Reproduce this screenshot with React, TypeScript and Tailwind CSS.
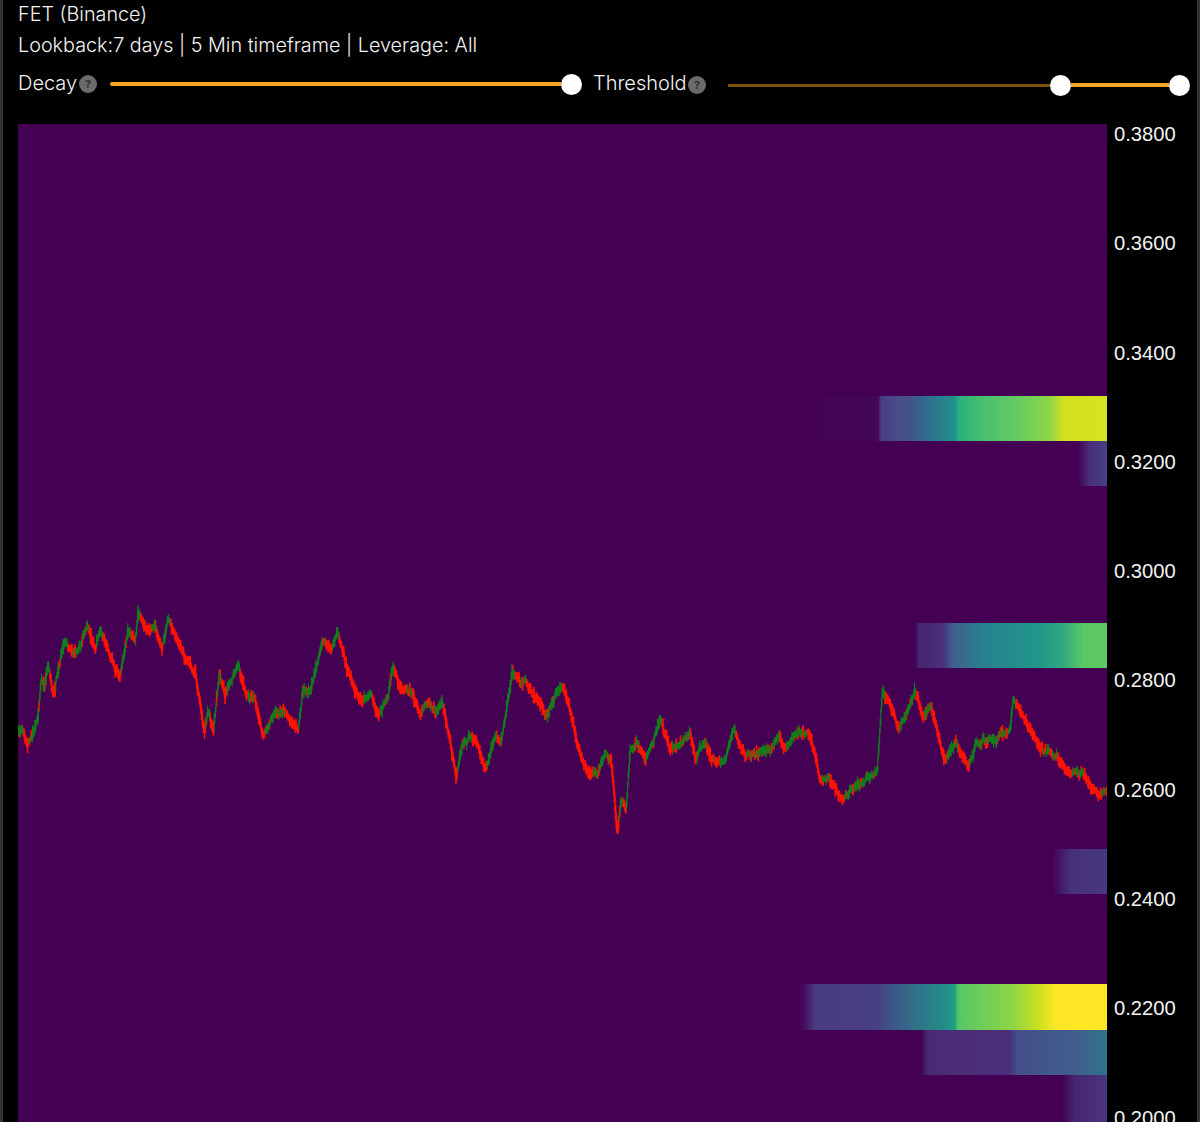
import React from 'react';

const pricePoints: [number, number][] = [
  [18,733],[22,728],[27,745],[33,733],[38,715],[41,680],[44,688],[48,665],[53,690],[60,660],[65,640],[72,650],[80,645],[87,622],[95,650],[100,630],[108,650],[120,675],[128,630],[135,640],[138,610],[148,630],[155,628],[162,650],[168,615],[175,635],[185,655],[195,670],[204,730],[208,710],[213,730],[219,670],[225,695],[230,680],[238,665],[245,695],[255,700],[263,735],[275,715],[285,712],[298,730],[303,690],[310,695],[322,640],[330,650],[337,635],[345,660],[355,690],[362,700],[370,690],[378,715],[388,695],[393,665],[400,690],
  [412,695],[420,715],[425,705],[435,715],[442,705],[450,740],[456,775],[462,745],[470,735],[478,745],[485,770],[495,735],[500,745],[505,720],[512,672],[520,685],[525,680],[535,700],[547,715],[555,695],[562,685],[570,710],[578,750],[590,775],[598,775],[605,755],[610,760],[612,770],[617,835],[621,800],[626,810],[630,750],[637,745],[645,760],[655,735],[660,720],[670,750],[680,745],[690,735],[695,760],[700,750],[705,745],[712,760],[725,760],[733,732],[745,755],[755,755],[770,745],[778,735],[785,750],[795,735],[808,730],
  [815,755],[820,780],[828,775],[838,795],[842,800],[855,790],[870,775],[877,770],[882,690],[888,700],[898,725],[905,715],[915,690],[922,715],[930,705],[937,730],[945,760],[955,745],[968,765],[975,745],[990,740],[1000,735],[1010,730],[1013,700],[1020,710],[1030,730],[1040,750],[1055,755],[1070,775],[1082,770],[1090,785],[1098,795],[1107,795],
];

// viridis bands, x in page pixels
const bands: { y: number; h: number; stops: [number, string][] }[] = [
  { y: 396, h: 45, stops: [[820,'#440154'],[830,'#440556'],[878,'#440657'],[881,'#4b3c85'],[900,'#464f8a'],[908,'#465088'],[917,'#3c5e8c'],[927,'#2f6f8d'],[955,'#218f8d'],[958,'#2aae80'],[980,'#45bf70'],[1010,'#60c865'],[1040,'#80d450'],[1050,'#8fd645'],[1060,'#c0dc28'],[1066,'#d4e01e'],[1107,'#d4e41e']] },
  { y: 441, h: 45, stops: [[1078,'#440154'],[1090,'#47307a'],[1107,'#473f85']] },
  { y: 623, h: 45, stops: [[915,'#440154'],[919,'#46256f'],[943,'#49307a'],[953,'#3e5f8c'],[980,'#2a7f8e'],[1040,'#1f9889'],[1063,'#30a880'],[1083,'#5ac864'],[1107,'#5dc863']] },
  { y: 849, h: 45, stops: [[1052,'#440154'],[1070,'#47307a'],[1107,'#47387f']] },
  { y: 984, h: 46, stops: [[798,'#440154'],[805,'#450f5e'],[815,'#483c83'],[877,'#483f84'],[900,'#3a6089'],[947,'#219087'],[955,'#20a083'],[958,'#55c667'],[1013,'#8ed645'],[1040,'#cfe11c'],[1057,'#fde725'],[1107,'#fde725']] },
  { y: 1030, h: 45, stops: [[921,'#440154'],[928,'#4a2a75'],[1010,'#4b2f7a'],[1017,'#44508a'],[1080,'#3f5f8c'],[1107,'#2f748c']] },
  { y: 1075, h: 47, stops: [[1062,'#440154'],[1075,'#47266f'],[1107,'#4a3580']] },
];

const axisLabels = ['0.3800','0.3600','0.3400','0.3200','0.3000','0.2800','0.2600','0.2400','0.2200','0.2000'];

const priceAt = (x: number) => {
  for (let i = 1; i < pricePoints.length; i++) {
    const [x0, y0] = pricePoints[i - 1];
    const [x1, y1] = pricePoints[i];
    if (x <= x1) return y0 + ((y1 - y0) * (x - x0)) / (x1 - x0);
  }
  return pricePoints[pricePoints.length - 1][1];
};

const buildCandles = () => {
  let seed = 7;
  const rand = () => {
    seed = (seed * 16807) % 2147483647;
    return seed / 2147483647;
  };
  let red = '';
  let green = '';
  let wobble = 0;
  for (let x = 18; x < 1107; x += 0.6) {
    wobble = wobble * 0.88 + (rand() - 0.5) * 3;
    const prev = priceAt(x - 0.6);
    const cur = priceAt(x);
    const top = Math.min(prev, cur) + wobble - 2 - rand() * rand() * 7;
    const bottom = Math.max(prev, cur) + wobble + 2 + rand() * rand() * 7;
    // steep falls stay red, steep rises stay green, flat stretches mix
    const slope = Math.max(-1, Math.min(1, (priceAt(x) - priceAt(x - 3)) / 4));
    const px = (x - 18).toFixed(1);
    const seg = `M${px} ${top.toFixed(1)}V${bottom.toFixed(1)}`;
    if (rand() < 0.55 + slope * 0.45) red += seg;
    else green += seg;
  }
  return { red, green };
};

const candles = buildCandles();

const HelpDot = ({ className }: { className: string }) => (
  <span className={`flex h-[18px] w-[18px] shrink-0 items-center justify-center rounded-full bg-[#6b6b6b] text-[11px] font-bold leading-none text-[#2e2e2e] ${className}`}>
    ?
  </span>
);

const Thumb = () => <span className="h-[21px] w-[21px] shrink-0 rounded-full bg-white" />;

export default function App() {
  return (
    <div className="h-[1122px] w-[1200px] overflow-hidden border-x-[3px] border-x-[#333333] bg-black font-['Inter',sans-serif] font-light text-[#f2f2f2]">
      <div className="pl-[15px] pt-[2px]">
        <div className="text-[19.8px] leading-[24px]">FET (Binance)</div>
        <div className="mt-[7px] text-[19.8px] leading-[24px]">Lookback:7 days | 5 Min timeframe | Leverage: All</div>
        <div className="mt-[14px] flex h-[24px] items-center text-[20px]">
          <span className="w-[61px]">Decay</span>
          <HelpDot className="mt-[2px]" />
          <div className="ml-[13px] mt-[2px] flex w-[472px] items-center">
            <span className="h-[4px] flex-1 rounded-l-full bg-[#f5a623]" />
            <Thumb />
          </div>
          <span className="ml-[11px] w-[95px]">Threshold</span>
          <HelpDot className="mt-[4px]" />
          <div className="ml-[22px] mt-[4px] flex w-[462px] items-center">
            <span className="h-[3px] flex-1 bg-[#7a5312]" />
            <Thumb />
            <span className="h-[4px] w-[98px] bg-[#f5a623]" />
            <Thumb />
          </div>
        </div>
      </div>
      <div className="mt-[29px] flex pl-[15px]">
        <svg width="1089" height="998" viewBox="0 124 1089 998" className="block shrink-0 bg-[#440154]">
          <defs>
            {bands.map((b) => {
              const x0 = b.stops[0][0];
              const x1 = b.stops[b.stops.length - 1][0];
              return (
                <linearGradient key={b.y} id={`band-${b.y}`} x1="0" x2="1" y1="0" y2="0">
                  {b.stops.map(([x, c]) => (
                    <stop key={x} offset={(x - x0) / (x1 - x0)} stopColor={c} />
                  ))}
                </linearGradient>
              );
            })}
          </defs>
          {bands.map((b) => (
            <rect
              key={b.y}
              x={b.stops[0][0] - 18}
              y={b.y}
              width={1107 - b.stops[0][0]}
              height={b.h}
              fill={`url(#band-${b.y})`}
            />
          ))}
          <path d={candles.red} stroke="#ff1200" strokeWidth="1.6" fill="none" />
          <path d={candles.green} stroke="#0f7f1c" strokeWidth="1.1" fill="none" />
        </svg>
        <div className="ml-[7px] flex flex-col gap-[89.3px] font-['Liberation_Sans',sans-serif] text-[20.2px] font-normal leading-[20px] text-[#f2f2f2]">
          {axisLabels.map((l) => (
            <span key={l}>{l}</span>
          ))}
        </div>
      </div>
    </div>
  );
}
